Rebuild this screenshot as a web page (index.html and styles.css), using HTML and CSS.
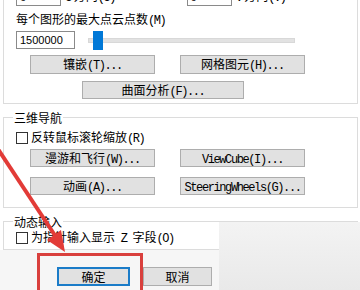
FILE: index.html
```html
<!DOCTYPE html>
<html lang="zh-CN">
<head>
    <meta charset="UTF-8">
    <title>选项 - 三维建模</title>
    <link rel="stylesheet" href="styles.css">
</head>
<body>
    <div class="page">
        <!-- 显示三维对象 (顶部被截断) -->
        <div class="group g1">
            <div class="row-top">
                <span class="field small">6</span>
                <span class="cap"><span class="m">U</span> 方向<span class="m">(U)</span></span>
                <span class="field small">6</span>
                <span class="cap"><span class="m">V</span> 方向<span class="m">(V)</span></span>
            </div>
            <div class="label">每个图形的最大点云点数<span class="m">(M)</span></div>
            <div class="slider-row">
                <span class="field num">1500000</span>
                <div class="slider">
                    <div class="track"></div>
                    <div class="thumb"></div>
                </div>
            </div>
            <div class="btn-row">
                <button class="btn">镶嵌<span class="m">(T)...</span></button>
                <button class="btn">网格图元<span class="m">(H)...</span></button>
            </div>
            <div class="btn-row single">
                <button class="btn wide">曲面分析<span class="m">(F)...</span></button>
            </div>
        </div>

        <!-- 三维导航 -->
        <div class="group g2">
            <span class="legend">三维导航</span>
            <label class="check-row"><span class="box"></span><span>反转鼠标滚轮缩放<span class="m">(R)</span></span></label>
            <div class="btn-row">
                <button class="btn">漫游和飞行<span class="m">(W)...</span></button>
                <button class="btn"><span class="m">ViewCube(I)...</span></button>
            </div>
            <div class="btn-row gap">
                <button class="btn">动画<span class="m">(A)...</span></button>
                <button class="btn"><span class="m">SteeringWheels(G)...</span></button>
            </div>
        </div>

        <!-- 动态输入 -->
        <div class="group g3">
            <span class="legend">动态输入</span>
            <label class="check-row"><span class="box"></span><span>为指针输入显示<span class="m"> Z </span>字段<span class="m">(O)</span></span></label>
        </div>

        <div class="footer">
            <button class="btn ok">确定</button>
            <button class="btn cancel">取消</button>
        </div>
    </div>

    <!-- 截图上的标注 -->
    <div class="shade"></div>
    <div class="red-box"></div>
    <svg class="arrow" width="360" height="290" viewBox="0 0 360 290">
        <line x1="-6" y1="143" x2="56" y2="237" stroke="#e23b37" stroke-width="4"/>
        <polygon points="65,252 61,230 47,240" fill="#e23b37"/>
    </svg>
</body>
</html>
```

FILE: styles.css
```css
/* Estilos generales */
body {
    margin: 0;
    width: 360px;
    height: 290px;
    overflow: hidden;
    position: relative;
    background: #ffffff;
    font-family: "Noto Sans CJK SC", sans-serif;
    font-size: 12px;
    color: #000;
}

.m {
    font-family: "Liberation Mono", monospace;
    font-size: 12px;
    letter-spacing: -1.4px;
}

.page {
    display: flex;
    flex-direction: column;
}

.group {
    position: relative;
    margin: 0 2px 0 3px;
    border: 1px solid #dcdcdc;
    padding-left: 12px;
}

.legend {
    position: absolute;
    top: -8px;
    left: 9px;
    padding: 0 1px;
    line-height: 16px;
    background: #ffffff;
}

.g1 {
    margin-top: -20px;
    padding-top: 7px;
    padding-bottom: 4px;
}

.g2 {
    margin-top: 13px;
    padding-top: 13px;
    padding-bottom: 12px;
}

.g3 {
    margin-top: 13px;
    padding-top: 9px;
    padding-bottom: 5px;
}

.row-top {
    display: flex;
    height: 18px;
    align-items: center;
}

.field {
    box-sizing: border-box;
    height: 18px;
    border: 1px solid #8a8a8a;
    background: #fff;
    padding-left: 3px;
    font-family: "Liberation Sans", sans-serif;
    font-size: 11px;
    line-height: 16px;
}

.field.small {
    width: 47px;
}

.cap {
    width: 127px;
    padding-left: 4px;
    line-height: 18px;
}

.label {
    margin-top: 5px;
    line-height: 16px;
}

.slider-row {
    display: flex;
    margin-top: 2px;
    height: 18px;
}

.field.num {
    width: 59px;
}

.slider {
    position: relative;
    width: 207px;
    margin-left: 13px;
    display: flex;
    align-items: center;
}

.track {
    width: 100%;
    height: 3px;
    background: #e2e2e2;
    border: 1px solid #d8d8d8;
}

.thumb {
    position: absolute;
    left: 5px;
    top: 0;
    width: 10px;
    height: 19px;
    background: #0078d7;
}

.btn-row {
    display: flex;
    gap: 25px;
    padding-left: 14px;
    margin-top: 6px;
}

.btn {
    box-sizing: border-box;
    width: 125px;
    height: 19px;
    padding: 0;
    border: 1px solid #adadad;
    background: #e1e1e1;
    font-family: "Noto Sans CJK SC", sans-serif;
    font-size: 12px;
    line-height: 16px;
    color: #000;
}

.g2 .btn,
.single .btn {
    height: 18px;
}

.single {
    margin-top: 7px;
    padding-left: 66px;
}

.btn.wide {
    width: 162px;
}

.g2 .btn-row {
    margin-top: 5px;
}

.g2 .btn-row.gap {
    margin-top: 10px;
}

.check-row {
    display: flex;
    align-items: center;
    height: 13px;
    line-height: 13px;
    white-space: pre;
}

.box {
    box-sizing: border-box;
    width: 12px;
    height: 12px;
    border: 1px solid #333;
    background: #fff;
    margin-right: 3px;
}

.footer {
    display: flex;
    gap: 13px;
    padding: 17px 0 0 57px;
    height: 25px;
    background: #f6f6f6;
}

.btn.ok {
    width: 73px;
    border: 2px solid #1b7cc8;
}

.btn.cancel {
    width: 69px;
}

/* Anotaciones sobre la captura */
.shade {
    position: absolute;
    left: 219px;
    top: 222px;
    right: 0;
    bottom: 0;
    background: linear-gradient(to bottom, #f3f3f3, #e9e9e9);
}

.red-box {
    position: absolute;
    left: 37px;
    top: 253px;
    width: 100px;
    height: 40px;
    border: 3px solid #d9403d;
}

.arrow {
    position: absolute;
    left: 0;
    top: 0;
}
```
